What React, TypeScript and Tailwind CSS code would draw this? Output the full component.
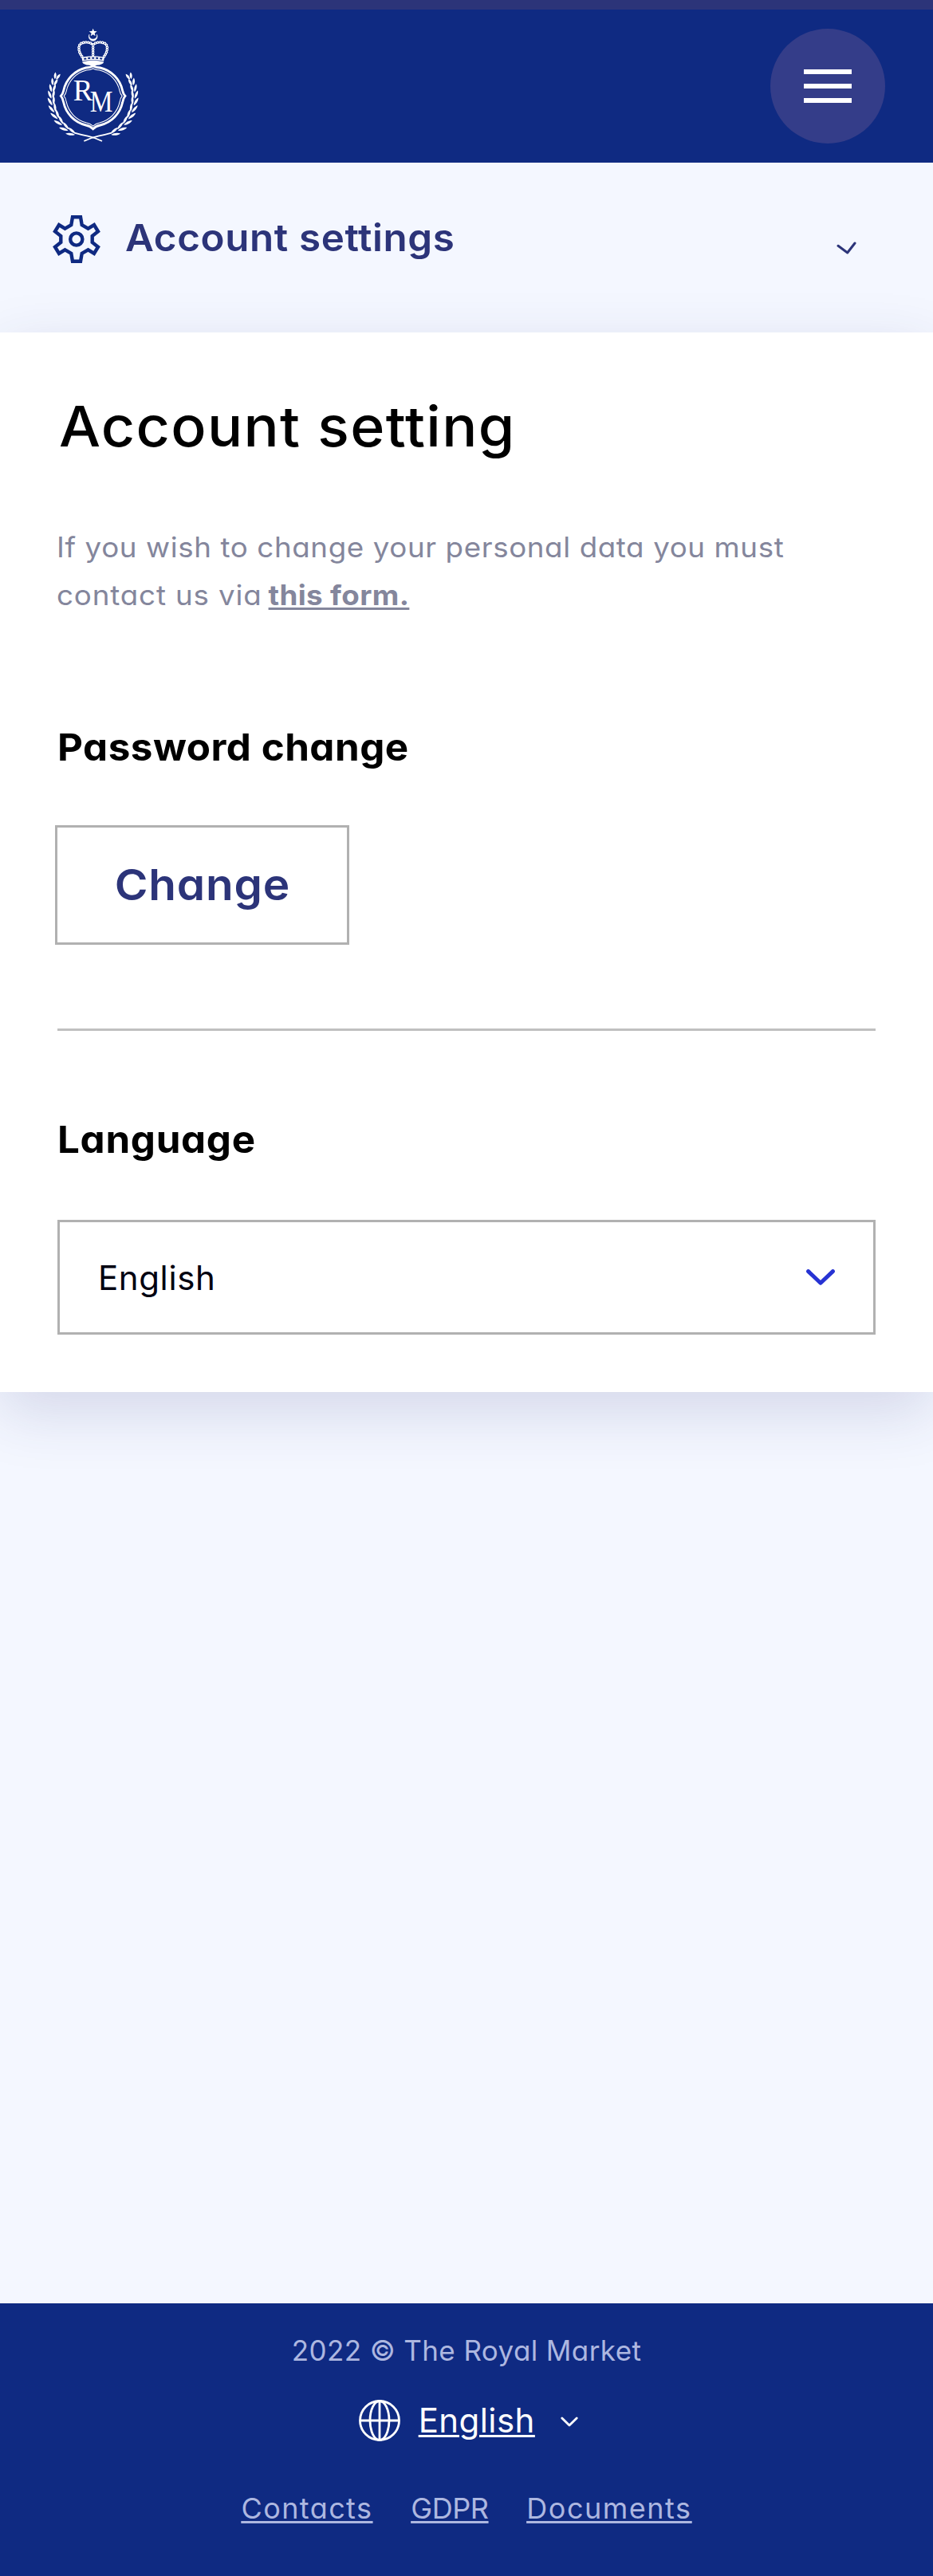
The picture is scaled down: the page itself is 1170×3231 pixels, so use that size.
type LeafSpec = { angle: number; length: number };

const leaves: LeafSpec[] = [
  { angle: 204, length: 26 },
  { angle: 195, length: 29 },
  { angle: 186, length: 31 },
  { angle: 177, length: 33 },
  { angle: 168, length: 34 },
  { angle: 158, length: 35 },
  { angle: 148, length: 36 },
  { angle: 138, length: 36 },
  { angle: 127, length: 36 },
  { angle: 116, length: 36 },
];

/* One laurel branch: pairs of leaves that fan out along an arc round the ring. */
function Laurel() {
  return (
    <g>
      {leaves.map(({ angle, length }) => {
        const a = (angle * Math.PI) / 180;
        const x = 230 + 154 * Math.cos(a);
        const y = 302 + 158 * Math.sin(a);
        const shape = `M0 0C6 ${-length * 0.3} 6 ${-length * 0.7} 0 ${-length}C-6 ${-length * 0.7} -6 ${-length * 0.3} 0 0Z`;
        return (
          <g key={angle} transform={`translate(${x} ${y})`}>
            <path d={shape} transform={`rotate(${angle - 180 - 19}) translate(-3 0)`} />
            <path d={shape} transform={`rotate(${angle - 180 + 14}) translate(2 0)`} />
          </g>
        );
      })}
      <path d="M160 440Q188 448 210 452Q238 458 264 471" fill="none" stroke="white" strokeWidth="5" />
    </g>
  );
}

const ring =
  "M230 188Q219 194 203 195A112 112 0 0 0 119 281Q117 292 109 301Q117 310 119 325A112 112 0 0 0 203 411Q219 414 230 425Q241 414 257 411A112 112 0 0 0 341 325Q343 310 351 301Q343 292 341 281A112 112 0 0 0 257 195Q241 194 230 188Z";

const crownArcs = [
  "M188 152C174 134 172 108 188 102C204 96 222 100 229 108",
  "M272 152C286 134 288 108 272 102C256 96 238 100 231 108",
  "M230 118V154",
];

function Crest() {
  return (
    <svg viewBox="0 0 480 540" className="h-[180px] w-[160px]" fill="white" aria-label="Royal Market">
      <path d="M230 47l4 10 11 1-9 7 3 11-9-6-9 6 3-11-9-7 11-1z" />
      <path d="M216 70A16 16 0 1 0 244 70A15 13 0 1 1 216 70Z" stroke="white" strokeWidth="2" />
      {crownArcs.map((d) => (
        <g key={d} fill="none" strokeLinecap="round">
          <path d={d} stroke="white" strokeWidth="11" strokeDasharray="0 9" />
          <path d={d} stroke="white" strokeWidth="6" />
          <path d={d} stroke="#0f2a82" strokeWidth="3.5" strokeDasharray="0 9" />
        </g>
      ))}
      <path d="M187 155Q230 146 273 155L270 170Q230 162 190 170Z" />
      <path d="M196 162Q230 154 266 162" fill="none" stroke="#0f2a82" strokeWidth="6" strokeDasharray="9 6" />
      <path d="M189 173Q230 162 271 173Q266 184 244 185L230 190L216 185Q194 184 189 173Z" />
      <path d={ring} fill="none" stroke="white" strokeWidth="8.5" />
      <path
        d={ring}
        transform="translate(230 303) scale(.905 .915) translate(-230 -303)"
        fill="none"
        stroke="white"
        strokeWidth="3.5"
      />
      <text x="155" y="317" fontSize="112" textLength="74" lengthAdjust="spacingAndGlyphs" fontFamily="Liberation Serif, serif">
        R
      </text>
      <text x="218" y="359" fontSize="112" textLength="86" lengthAdjust="spacingAndGlyphs" fontFamily="Liberation Serif, serif">
        M
      </text>
      <Laurel />
      <g transform="translate(460 0) scale(-1 1)">
        <Laurel />
      </g>
    </svg>
  );
}

function Gear() {
  return (
    <svg viewBox="0 0 60 60" className="size-[60px]" fill="none" stroke="#0f2a82" strokeWidth="4.4">
      <path d="M25 2.2H35L36.7 12.2L44.5 16.6L52 12L57 20.3L49.7 26V34L57 39.7L52 48L44.5 43.4L36.7 47.8L35 57.8H25L23.3 47.8L15.5 43.4L8 48L3 39.7L10.3 34V26L3 20.3L8 12L15.5 16.6L23.3 12.2Z" />
      <circle cx="29.8" cy="30" r="7.6" />
    </svg>
  );
}

function Globe() {
  return (
    <svg viewBox="0 0 52 52" className="size-[52px]" fill="none" stroke="white" strokeWidth="2.8">
      <circle cx="26" cy="26" r="24.5" />
      <ellipse cx="26" cy="26" rx="12" ry="24.5" />
      <path d="M26 1.5V50.5M1.5 26H50.5" />
    </svg>
  );
}

export default function App() {
  return (
    <div className="flex h-[3231px] w-[1170px] flex-col bg-[#f4f7ff] font-['Inter',sans-serif] text-black [font-feature-settings:'cv11']">
      <div className="h-3 shrink-0 bg-[#2c3479]" />
      <header className="flex h-48 shrink-0 items-start justify-between bg-[#0f2a82] pr-[60px] pl-10">
        <div className="pt-2">
          <Crest />
        </div>
        <button
          aria-label="Menu"
          className="mt-6 flex size-36 flex-col items-center justify-center gap-3 rounded-full bg-[#343d89]"
        >
          <span className="h-1.5 w-[60px] bg-white" />
          <span className="h-1.5 w-[60px] bg-white" />
          <span className="h-1.5 w-[60px] bg-white" />
        </button>
      </header>

      <nav className="flex h-[213px] shrink-0 items-start pt-16 pr-[95px] pl-[66px]">
        <div className="mt-0.5">
          <Gear />
        </div>
        <span className="ml-[30.5px] origin-left scale-x-105 text-[47px] leading-[60px] font-semibold tracking-[0.59px] text-[#2c3479]">
          Account settings
        </span>
        <svg
          viewBox="0 0 26 18"
          className="mt-[34px] ml-auto h-[18px] w-[26px]"
          fill="none"
          stroke="#2c3479"
          strokeWidth="3"
          strokeLinecap="round"
          strokeLinejoin="round"
        >
          <path d="M2 6.3L13.7 15L23 3" />
        </svg>
      </nav>

      <main className="shrink-0 bg-white px-[72px] pt-[76px] pb-[72px] shadow-[0_24px_72px_rgba(44,52,121,0.16)]">
        <h1 className="ml-[1.5px] origin-left scale-x-105 text-[70px] leading-[84px] font-medium tracking-[1.25px]">
          Account setting
        </h1>
        <p className="mt-[79px] -ml-px origin-left scale-x-105 text-[35px] leading-[60px] tracking-[0.57px] whitespace-nowrap text-[#84869c]">
          If you wish to change your personal data you must
          <br />
          <span className="tracking-[0.8px]">contact us via </span>
          <a className="-ml-[3px] font-bold tracking-[0.35px] underline decoration-[3px] underline-offset-[3px]">this form.</a>
        </p>

        <h2 className="mt-[131px] origin-left scale-x-105 text-[47px] leading-[60px] font-bold tracking-[0.47px]">
          Password change
        </h2>
        <button className="mt-[68px] -ml-[3px] flex h-[150px] w-[369px] items-center justify-center border-3 border-[#b1b1b1] text-[54px] leading-none font-semibold text-[#2c3479]">
          <span className="scale-x-105 tracking-[0.75px]">Change</span>
        </button>

        <div className="mt-[105px] h-[3px] bg-[#c0c0c0]" />

        <h2 className="mt-[106px] origin-left scale-x-105 text-[47px] leading-[60px] font-bold tracking-[0.65px]">
          Language
        </h2>
        <div className="mt-[71px] flex h-36 items-center justify-between border-3 border-[#b1b1b1] pr-12 pl-12 text-[42px] tracking-[0.6px] text-[#000010]">
          <span>English</span>
          <svg
            viewBox="0 0 36 20"
            className="h-5 w-9"
            fill="none"
            stroke="#2733d3"
            strokeWidth="5"
            strokeLinecap="round"
            strokeLinejoin="round"
          >
            <path d="M2.6 2.6L18 17.3L33.4 2.6" />
          </svg>
        </div>
      </main>

      <footer className="mt-auto flex h-[342px] shrink-0 flex-col items-center bg-[#0f2a82] pt-[39px] text-[36px] text-[#adb7e0]">
        <p className="text-[35px] leading-10 tracking-[0.4px]">2022 © The Royal Market</p>
        <div className="mt-[42px] flex h-[52px] items-center pl-[5px] text-white">
          <Globe />
          <a className="ml-[22.5px] text-[42px] leading-[52px] tracking-[0.43px] underline decoration-[3px] underline-offset-[3px]">
            English
          </a>
          <svg
            viewBox="0 0 22 13"
            className="mt-[3px] ml-8 h-[13px] w-[22px]"
            fill="none"
            stroke="white"
            strokeWidth="2.8"
            strokeLinecap="round"
            strokeLinejoin="round"
          >
            <path d="M1.8 2L11 11L20.2 2" />
          </svg>
        </div>
        <div className="mt-16 flex gap-12 leading-10 underline decoration-[3px] underline-offset-[3px]">
          <a className="tracking-[1.4px]">Contacts</a>
          <a className="tracking-[-0.5px]">GDPR</a>
          <a className="tracking-[1.5px]">Documents</a>
        </div>
      </footer>
    </div>
  );
}
